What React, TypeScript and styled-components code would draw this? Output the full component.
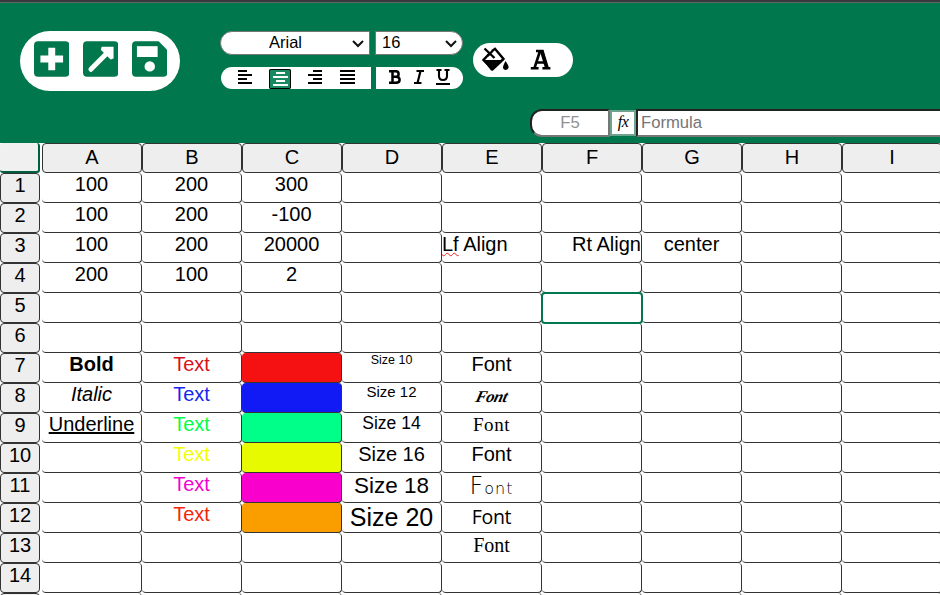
import React from "react";
import styled, { createGlobalStyle, css } from "styled-components";

const GREEN = "#00774c";

const GlobalStyle = createGlobalStyle`
  * { box-sizing: border-box; }
  html, body { margin: 0; padding: 0; overflow: hidden; background: #fff; }
  body { font-family: Arial, "Liberation Sans", sans-serif; color: #000; }
`;

const Page = styled.div`
  width: 940px;
  height: 595px;
  overflow: hidden;
  background: #fff;
`;

const Header = styled.header`
  height: 143px;
  background: ${GREEN};
  border-top: 2px solid #38393d;
  box-shadow: inset 0 1px 0 #5f6663;
`;

const Toolbar = styled.div`
  display: flex;
  align-items: flex-start;
  height: 107px;
  padding: 29px 0 0 20px;
`;

const FilePill = styled.div`
  display: flex;
  gap: 13.5px;
  width: 160px;
  height: 60px;
  padding: 10px 0 0 13.5px;
  border-radius: 30px;
  background: #fff;
`;

const Formatting = styled.div`
  display: grid;
  grid-template-columns: 151px 88px;
  grid-template-rows: 24px 22px;
  gap: 12px 4px;
  margin-left: 40px;
`;

const SelectBox = styled.div<{ $side: "left" | "right" }>`
  display: flex;
  align-items: center;
  justify-content: space-between;
  width: ${(p) => (p.$side === "left" ? 150 : 88)}px;
  padding: 0 5px 2px ${(p) => (p.$side === "left" ? 48 : 6)}px;
  border: 1px solid #767676;
  border-radius: ${(p) => (p.$side === "left" ? "12px 0 0 12px" : "0 12px 12px 0")};
  background: #fff;
  font-size: 16.5px;
  line-height: 20px;

  svg { margin-top: 3px; }
`;

const ToolGroup = styled.div<{ $side: "left" | "right" }>`
  display: flex;
  align-items: flex-start;
  margin-left: 1px;
  padding-left: ${(p) => (p.$side === "left" ? 13 : 8)}px;
  gap: ${(p) => (p.$side === "left" ? 10 : 2)}px;
  width: ${(p) => (p.$side === "left" ? 150 : 87)}px;
  border-radius: ${(p) => (p.$side === "left" ? "11px 0 0 11px" : "0 11px 11px 0")};
  background: #fff;
`;

const Tool = styled.span<{ $active?: boolean }>`
  display: flex;
  flex: none;
  justify-content: center;
  align-items: center;
  width: 22px;
  height: 20px;
  color: #000;
  ${(p) =>
    p.$active &&
    css`
      margin: 2px 3px 0;
      color: #fff;
      background: #178b5f;
      box-shadow: inset 0 0 0 1px #000;
      border-radius: 2px;
    `}
`;

const ColorPill = styled.div`
  display: flex;
  gap: 20px;
  width: 100px;
  height: 34px;
  margin: 12px 0 0 10px;
  padding: 4px 0 0 9px;
  border-radius: 17px;
  background: #fff;
`;

const FormulaBar = styled.div`
  display: flex;
  height: 28px;
  margin-left: 530px;
`;

const Field = styled.div<{ $address?: boolean }>`
  flex: ${(p) => (p.$address ? "0 0 80px" : "1")};
  border: 2px solid;
  border-color: #222 #767676 #767676 #222;
  border-radius: ${(p) => (p.$address ? "12px 0 0 12px" : "0")};
  ${(p) => !p.$address && "border-right: 0;"}
  padding-left: ${(p) => (p.$address ? 0 : 3)}px;
  background: #fff;
  color: ${(p) => (p.$address ? "#919191" : "#757575")};
  text-align: ${(p) => (p.$address ? "center" : "left")};
  font-size: 16.67px;
  line-height: 23px;
`;

const FunctionMark = styled.div`
  width: 26px;
  height: 26px;
  margin-top: 1px;
  border: 2px solid #6da38d;
  background: #fff;
  text-align: center;
  font: italic 16px/20px "Liberation Serif", serif;
  letter-spacing: -0.5px;
`;

const Sheet = styled.main`
  display: grid;
  grid-template-columns: 40px repeat(9, 100px);
  grid-auto-rows: 30px;
`;

const Corner = styled.div`
  border: solid #00603d;
  border-width: 0 2px 2px 0;
  border-radius: 3px;
  background: #f0f0f0;
`;

const Heading = styled.div<{ $row?: boolean }>`
  margin-left: ${(p) => (p.$row ? 0 : 2)}px;
  margin-right: ${(p) => (p.$row ? 0 : -2)}px;
  border: 1px solid #333;
  border-radius: 4px;
  background: #eee;
  text-align: center;
  font-size: 20px;
  line-height: ${(p) => (p.$row ? 23 : 27)}px;
`;

type CellStyle = {
  $color?: string;
  $fill?: string;
  $size?: number;
  $align?: string;
  $face?: string;
  $weight?: number;
  $italic?: boolean;
  $underline?: boolean;
  $selected?: boolean;
  $lift?: number;
  $spacing?: number;
};

const Cell = styled.div<CellStyle>`
  margin: 0 -2px 0 2px;
  border: solid #333;
  border-width: 0 1px 1px 0;
  border-radius: 4px;
  background: ${(p) => p.$fill ?? "#fff"};
  color: ${(p) => p.$color ?? "#000"};
  font-family: ${(p) => p.$face ?? '"Liberation Sans", sans-serif'};
  font-size: ${(p) => p.$size ?? 20}px;
  font-weight: ${(p) => p.$weight ?? 400};
  font-style: ${(p) => (p.$italic ? "italic" : "normal")};
  line-height: ${(p) => (p.$face ? "23px" : "normal")};
  letter-spacing: ${(p) => p.$spacing ?? 0}px;
  padding-top: ${(p) => p.$lift ?? 0}px;
  text-align: ${(p) => p.$align ?? "center"};
  text-decoration: ${(p) => (p.$underline ? "underline" : "none")};
  white-space: nowrap;
  ${(p) =>
    p.$selected &&
    css`
      z-index: 1;
      margin: -1px -3px -1px 1px;
      border: 2px solid ${GREEN};
    `}
`;

const Misspelled = styled.span`
  text-decoration: underline wavy #f02020 1px;
  text-underline-offset: 1px;
  text-decoration-skip-ink: none;
`;

const Initial = styled.span`
  font-size: 24px;
`;

const Script = styled.span`
  display: inline-block;
  transform: skewX(-14deg);
`;

const FileIcon = ({ kind }: { kind: "new" | "open" | "save" }) => (
  <svg width="35.5" height="36" viewBox="0 0 36 36">
    <path
      fill={GREEN}
      d={
        kind === "save"
          ? "M4 0H27L36 9V32Q36 36 32 36H4Q0 36 0 32V4Q0 0 4 0Z"
          : "M4 0H32Q36 0 36 4V32Q36 36 32 36H4Q0 36 0 32V4Q0 0 4 0Z"
      }
    />
    {kind === "new" && <path d="M18 6.5V29.5M6.5 18H29.5" stroke="#fff" strokeWidth="7" />}
    {kind === "open" && (
      <>
        <path d="M8 28.5L26 10.5" stroke="#fff" strokeWidth="5" strokeLinecap="round" />
        <path d="M19 5.5H31V17.5L28 18.5L18 8.5Z" fill="#fff" />
      </>
    )}
    {kind === "save" && (
      <>
        <path d="M5 5H26V16H5Z" fill="#fff" />
        <circle cx="18" cy="25.5" r="5.3" fill="#fff" />
      </>
    )}
  </svg>
);

const Chevron = () => (
  <svg width="12" height="8" viewBox="0 0 12 8">
    <path d="M1 1L6 6L11 1" fill="none" stroke="#111" strokeWidth="2" />
  </svg>
);

const AlignIcon = ({ kind }: { kind: "left" | "center" | "right" | "justify" }) => {
  const d = {
    left: "M0 1H9M0 5H14M0 9H9M0 13H14",
    center: "M3 1H12M0 5H15M3 9H12M0 13H15",
    right: "M5 1H14M0 5H14M5 9H14M0 13H14",
    justify: "M0 1H15M0 5H15M0 9H15M0 13H15",
  }[kind];
  return (
    <svg width="15" height="14" viewBox="0 0 15 14">
      <path d={d} stroke="currentColor" strokeWidth="2" fill="none" />
    </svg>
  );
};

const BoldIcon = () => (
  <svg width="12" height="14" viewBox="0 0 12 14">
    <path d="M0 1.2H7Q9.6 1.2 9.6 4Q9.6 6.8 7 6.8H3M7 6.8Q10.6 6.8 10.6 9.8Q10.6 12.8 7 12.8H0M3.5 1V13" fill="none" stroke="#000" strokeWidth="2.5" />
  </svg>
);

const ItalicIcon = () => (
  <svg width="10" height="14" viewBox="0 0 10 14">
    <path d="M2.5 1H10M0 13H7.5M6.5 1L3.5 13" fill="none" stroke="#000" strokeWidth="2.2" />
  </svg>
);

const UnderlineIcon = () => (
  <svg width="14" height="16" viewBox="0 0 14 16">
    <path d="M0.5 1H5.5M8.5 1H13.5M3 1V7Q3 11 7 11Q11 11 11 7V1M0 15H14" fill="none" stroke="#000" strokeWidth="2.1" />
  </svg>
);

const FillIcon = () => (
  <svg width="28" height="24" viewBox="0 0 28 24">
    <path d="M10 4L13 1.8L21.5 12L10.5 22L1.5 13L7.5 6.5" fill="none" stroke="#000" strokeWidth="2.4" />
    <path d="M1 13H22L11 23.5H9Z" fill="#000" />
    <path d="M2.5 1.5L12.5 11M10.5 4L5.5 9" stroke="#000" strokeWidth="2.4" />
    <path d="M23.5 14C26 18 27 19 26.5 21Q25.5 23 23.5 23Q21 22.5 21 20.5Q21 18.5 23.5 14Z" fill="#000" />
  </svg>
);

const LetterIcon = () => (
  <svg width="22" height="24" viewBox="0 0 22 24">
    <path
      d="M6 4H13.5M10 4L4.5 21M12 4L17 21M6 15.5H15.5M0.8 21.3H8.6M12.4 21.3H20.4"
      fill="none"
      stroke="#000"
      strokeWidth="2.6"
    />
    <path d="M9.5 3H13.5L19 21H15L11 8Z" fill="#000" />
  </svg>
);

type CellData = CellStyle & { text?: React.ReactNode };

const cells: Record<string, CellData> = {
  A1: { text: "100" }, B1: { text: "200" }, C1: { text: "300" },
  A2: { text: "100" }, B2: { text: "200" }, C2: { text: "-100" },
  A3: { text: "100" }, B3: { text: "200" }, C3: { text: "20000" },
  E3: { text: <><Misspelled>Lf</Misspelled> Align</>, $align: "left" },
  F3: { text: "Rt Align", $align: "right" },
  G3: { text: "center" },
  A4: { text: "200" }, B4: { text: "100" }, C4: { text: "2" },
  F5: { $selected: true },
  A7: { text: "Bold", $weight: 700 },
  A8: { text: "Italic", $italic: true },
  A9: { text: "Underline", $underline: true },
  B7: { text: "Text", $color: "#d81118" },
  B8: { text: "Text", $color: "#1626f0" },
  B9: { text: "Text", $color: "#00ff45" },
  B10: { text: "Text", $color: "#f2ff00" },
  B11: { text: "Text", $color: "#f500d0" },
  B12: { text: "Text", $color: "#f52508" },
  C7: { $fill: "#f51111" },
  C8: { $fill: "#1119f5" },
  C9: { $fill: "#00ff88" },
  C10: { $fill: "#e8fa00" },
  C11: { $fill: "#fa00cc" },
  C12: { $fill: "#fa9e00" },
  D7: { text: "Size 10", $size: 12.5 },
  D8: { text: "Size 12", $size: 15 },
  D9: { text: "Size 14", $size: 17.5 },
  D10: { text: "Size 16" },
  D11: { text: "Size 18", $size: 22.5 },
  D12: { text: "Size 20", $size: 25 },
  E7: { text: "Font" },
  E8: { text: <Script>Font</Script>, $face: '"Brush Script MT", "Liberation Serif", cursive', $size: 16.5, $italic: true, $weight: 700, $lift: 2, $spacing: -0.4 },
  E9: { text: "Font", $face: '"Liberation Serif", serif', $size: 19, $spacing: 0.6 },
  E10: { text: "Font" },
  E11: {
    text: <><Initial>F</Initial>ont</>,
    $face: '"DejaVu Sans Light", "DejaVu Sans", sans-serif',
    $size: 16, $weight: 200, $lift: 2, $spacing: 1,
  },
  E12: { text: "Font", $face: '"Open Sans", "Noto Sans", sans-serif', $size: 19.5, $lift: 2, $spacing: -0.3 },
  E13: { text: "Font", $face: '"Liberation Serif", serif', $size: 20, $lift: 1 },
};

const columns = "ABCDEFGHI".split("");
const rows = Array.from({ length: 14 }, (_, i) => i + 1);

export default function App() {
  return (
    <Page>
      <GlobalStyle />
      <Header>
        <Toolbar>
          <FilePill>
            <FileIcon kind="new" />
            <FileIcon kind="open" />
            <FileIcon kind="save" />
          </FilePill>
          <Formatting>
            <SelectBox $side="left">Arial<Chevron /></SelectBox>
            <SelectBox $side="right">16<Chevron /></SelectBox>
            <ToolGroup $side="left">
              <Tool><AlignIcon kind="left" /></Tool>
              <Tool $active><AlignIcon kind="center" /></Tool>
              <Tool><AlignIcon kind="right" /></Tool>
              <Tool><AlignIcon kind="justify" /></Tool>
            </ToolGroup>
            <ToolGroup $side="right">
              <Tool><BoldIcon /></Tool>
              <Tool><ItalicIcon /></Tool>
              <Tool><UnderlineIcon /></Tool>
            </ToolGroup>
          </Formatting>
          <ColorPill>
            <FillIcon />
            <LetterIcon />
          </ColorPill>
        </Toolbar>
        <FormulaBar>
          <Field $address>F5</Field>
          <FunctionMark>fx</FunctionMark>
          <Field>Formula</Field>
        </FormulaBar>
      </Header>
      <Sheet>
        <Corner />
        {columns.map((c) => (
          <Heading key={c}>{c}</Heading>
        ))}
        {rows.map((r) => (
          <React.Fragment key={r}>
            <Heading $row>{r}</Heading>
            {columns.map((c) => {
              const { text, ...look } = cells[`${c}${r}`] ?? {};
              return <Cell key={c} {...look}>{text}</Cell>;
            })}
          </React.Fragment>
        ))}
        <Heading $row />
        {columns.map((c) => (
          <Cell key={c} />
        ))}
      </Sheet>
    </Page>
  );
}
